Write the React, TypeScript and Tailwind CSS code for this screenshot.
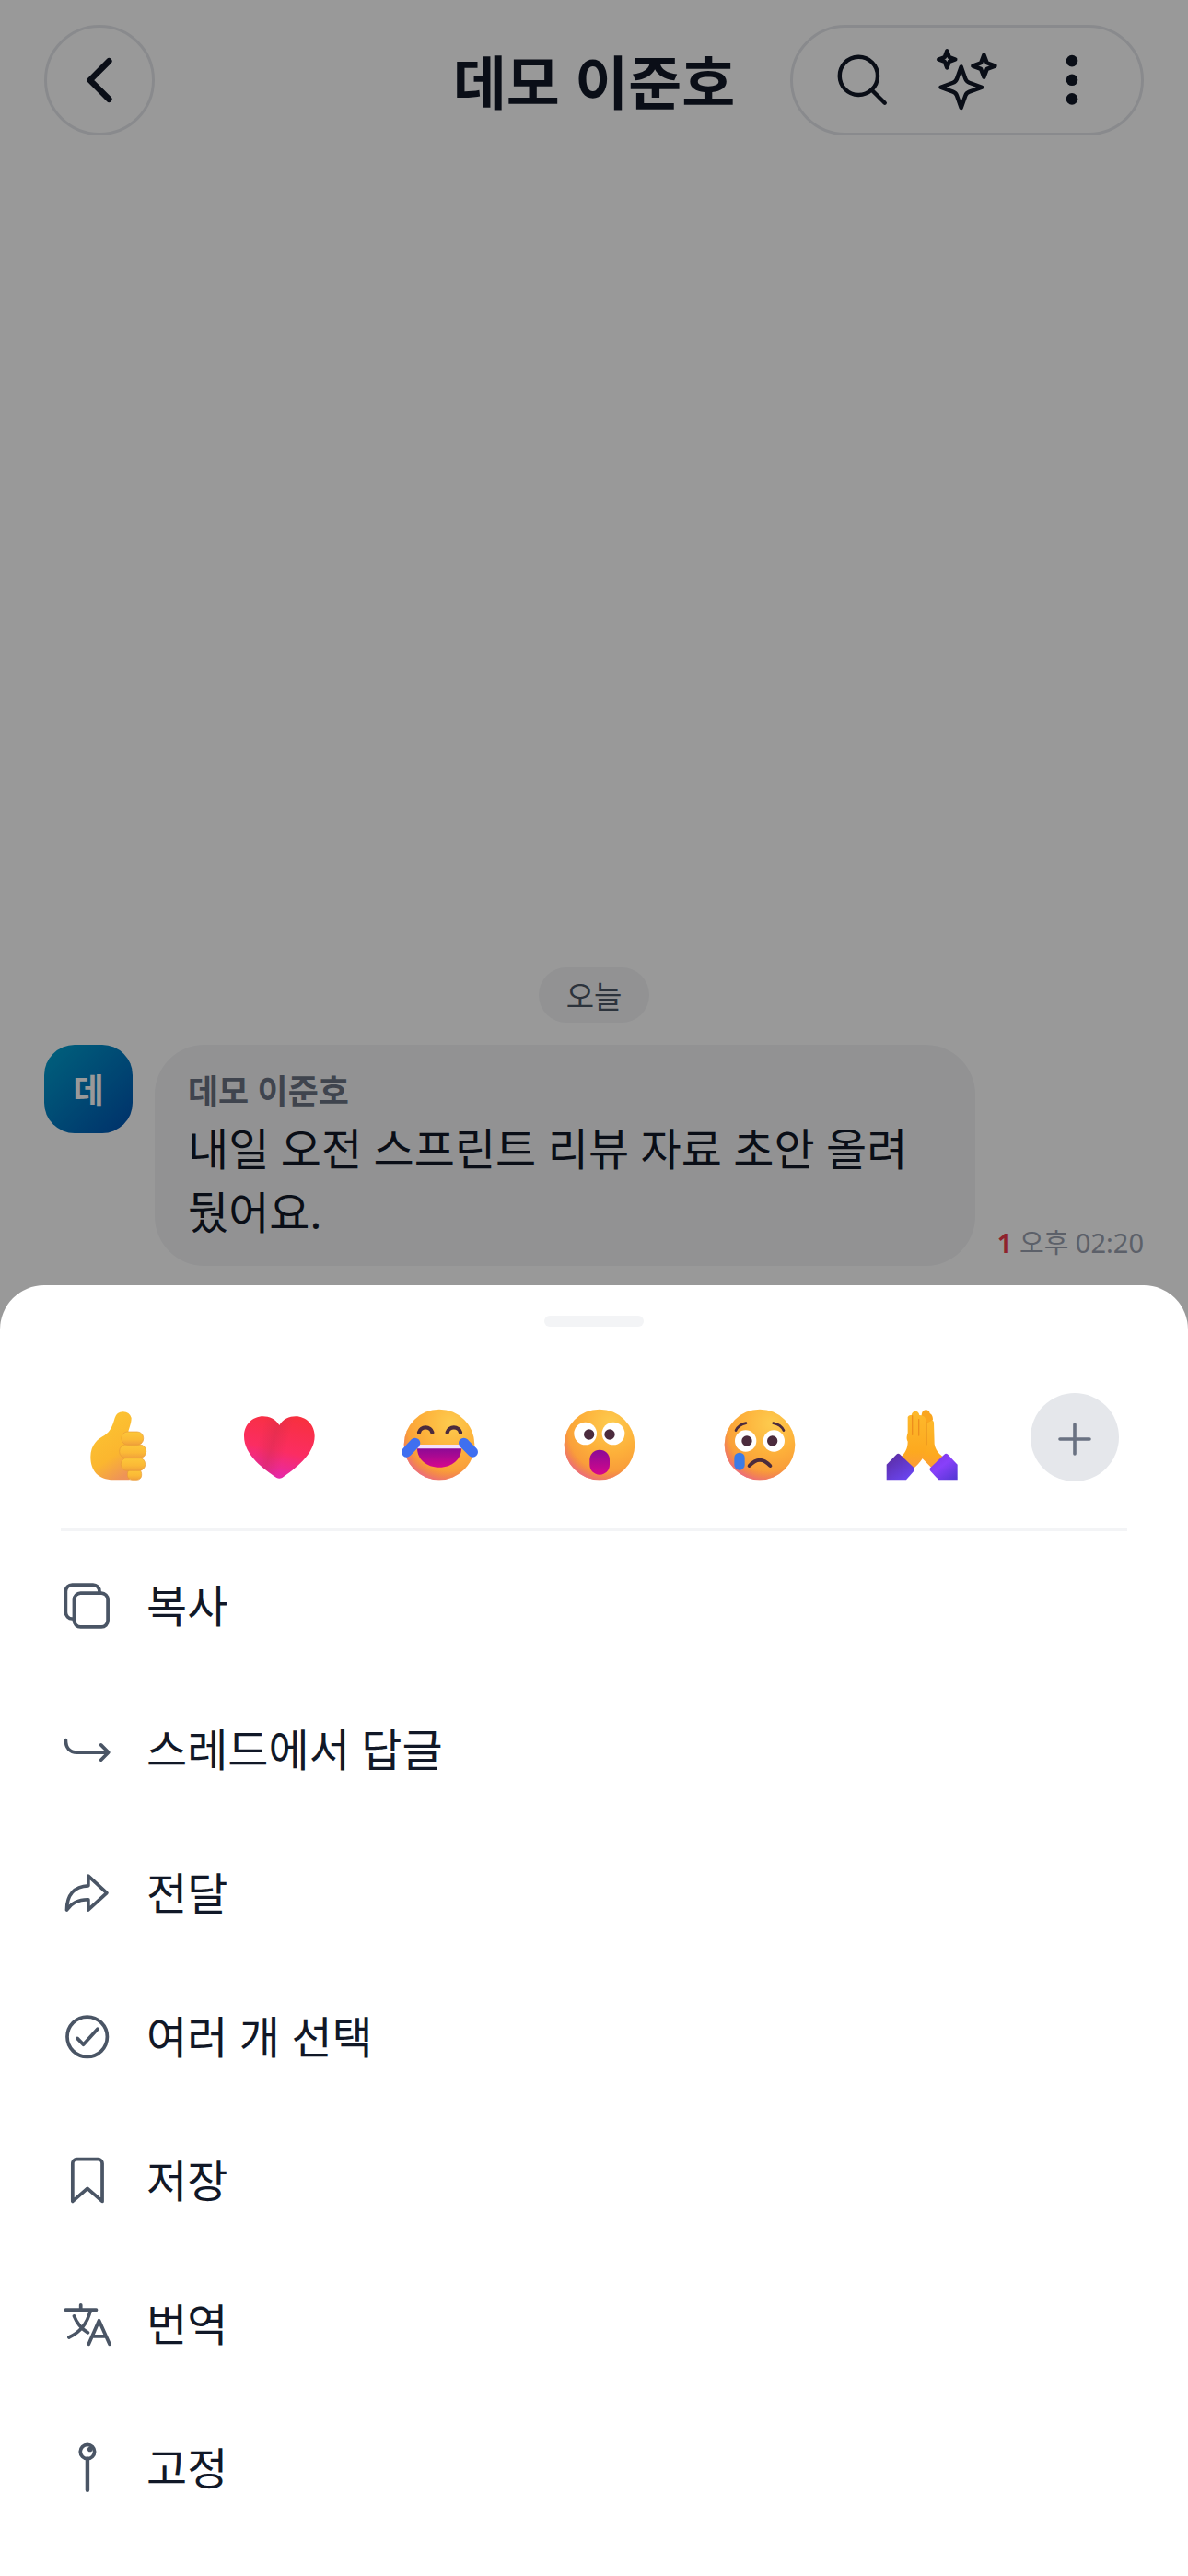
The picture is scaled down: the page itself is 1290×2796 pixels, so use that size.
import type { ReactNode } from 'react';

interface IconProps {
  children: ReactNode;
  className?: string;
  strokeWidth?: number;
}

const Icon: React.FC<IconProps> = ({ children, className = 'size-14', strokeWidth = 1.6 }) => (
  <svg
    viewBox="0 0 24 24"
    fill="none"
    stroke="currentColor"
    strokeWidth={strokeWidth}
    strokeLinecap="round"
    strokeLinejoin="round"
    className={`${className} shrink-0 overflow-visible`}
    aria-hidden="true"
  >
    {children}
  </svg>
);

const actions: { label: string; icon: ReactNode }[] = [
  {
    label: '복사',
    icon: (
      <>
        <rect x="6.2" y="6.1" width="15.7" height="15.7" rx="3" />
        <path d="M18 6V5.2a3 3 0 0 0-3-3H5.3a3 3 0 0 0-3 3V15a3 3 0 0 0 3 3h.9" />
      </>
    ),
  },
  {
    label: '스레드에서 답글',
    icon: <path d="M2.3 7.5c0 3.6 1.9 5.8 5.2 5.8H22M18.7 9.8l3.5 3.5-3.5 3.5" />,
  },
  {
    label: '전달',
    icon: <path d="M12.8 3.9l8.6 7.9-8.6 7.9v-4.8c-4.6-.1-7.6 1.3-10 4.8 0-6.9 3.5-11 10-11.2z" />,
  },
  {
    label: '여러 개 선택',
    icon: (
      <>
        <circle cx="12.3" cy="11.9" r="9.3" />
        <path d="M7.7 12.6l2.8 2.9 6.6-7.3" />
      </>
    ),
  },
  {
    label: '저장',
    icon: <path d="M5.5 21.6V4a2 2 0 0 1 2-2h9.8a2 2 0 0 1 2 2v17.6l-6.9-6z" />,
  },
  {
    label: '번역',
    icon: (
      <path d="M2.3 5.2h14.2M9.3 2.9v2.3M13.8 5.4C12.4 11.4 9 15.6 3.8 18M6.2 8.1c1.3 3.4 3.4 5.9 6.4 7.7M13 21.1l4.8-10.9 4.9 10.9M14.6 17.5h6.5" />
    ),
  },
  {
    label: '고정',
    icon: (
      <>
        <circle cx="12.4" cy="4.3" r="3.3" />
        <path d="M12.4 7.6v14.6" strokeWidth="1.9" />
        <circle cx="13.6" cy="3.2" r="1.2" fill="currentColor" stroke="none" />
      </>
    ),
  },
];

const Face: React.FC<{ children: ReactNode }> = ({ children }) => (
  <>
    <circle cx="132" cy="132" r="115" fill="url(#face)" />
    <circle cx="132" cy="132" r="115" fill="url(#faceShade)" />
    {children}
  </>
);

const heartPath =
  'M133 69c-13-21-33-29-53-29-35 0-62 28-62 64 0 64 67 108 106 136q9 5 18 0c39-28 106-75 106-136 0-36-28-64-62-64-21 0-40 8-53 29z';

const reactions: { label: string; art: ReactNode }[] = [
  {
    label: '좋아요',
    art: (
      <>
        <path
          d="M119 45a28 28 0 0 1 54 0c0 20-9 35-10 47l4 155h-52c-50 0-75-30-75-75 0-40 25-60 45-70 23-14 28-38 34-57z"
          fill="url(#thumb)"
        />
        <g fill="url(#finger)" stroke="#e89a35" strokeWidth="2">
          <rect x="160" y="212" width="46" height="35" rx="15" />
          <rect x="139" y="175" width="79" height="42" rx="20" />
          <rect x="134" y="132" width="87" height="44" rx="21" />
          <rect x="141" y="90" width="71" height="43" rx="20" />
        </g>
      </>
    ),
  },
  {
    label: '하트',
    art: (
      <>
        <path d={heartPath} fill="url(#heart)" />
        <path d={heartPath} fill="url(#heartFold)" />
      </>
    ),
  },
  {
    label: '웃겨요',
    art: (
      <Face>
        <path
          d="M66 92a22 20 0 0 1 43 0M158 92a22 20 0 0 1 43 0"
          fill="none"
          stroke="#4b2b3d"
          strokeWidth="13"
          strokeLinecap="round"
        />
        <path d="M60 143h144c0 36-30 63-72 63s-72-27-72-63z" fill="url(#mouth)" />
        <path d="M58 132h148l-2 13H60z" fill="#f3e0fb" />
        <path d="M26 156l27-29M212 127l29 29" stroke="#3f6ff0" strokeWidth="34" strokeLinecap="round" />
      </Face>
    ),
  },
  {
    label: '놀라워요',
    art: (
      <Face>
        <circle cx="86" cy="96" r="37" fill="#fff" />
        <circle cx="177" cy="96" r="37" fill="#fff" />
        <circle cx="98" cy="99" r="17" fill="#4b2b3d" />
        <circle cx="165" cy="99" r="17" fill="#4b2b3d" />
        <rect x="100" y="149" width="65" height="81" rx="32" fill="url(#mouth)" />
      </Face>
    ),
  },
  {
    label: '슬퍼요',
    art: (
      <Face>
        <path
          d="M54 86q10-20 33-24M176 62q25 5 34 24"
          fill="none"
          stroke="#4b2b3d"
          strokeWidth="8"
          strokeLinecap="round"
        />
        <circle cx="86" cy="120" r="35" fill="#fff" />
        <circle cx="178" cy="120" r="35" fill="#fff" />
        <circle cx="90" cy="120" r="17" fill="#4b2b3d" />
        <circle cx="173" cy="120" r="17" fill="#4b2b3d" />
        <path
          d="M98 201q34-38 68 0"
          fill="none"
          stroke="#4b2b3d"
          strokeWidth="12"
          strokeLinecap="round"
        />
        <rect x="49" y="158" width="34" height="57" rx="17" fill="#3d7be6" />
      </Face>
    ),
  },
  {
    label: '감사해요',
    art: (
      <>
        <path
          d="M153 60c0-12 24-12 24 0l2 70c4 24 18 34 32 46l-34 38c-18-16-30-30-44-44z"
          fill="url(#hands)"
        />
        <path d="M138 30c2-14 24-16 26 0 8 4 10 12 10 22l-20 10-20-10z" fill="#f9a51f" />
        <path
          d="M92 42c4-6 8-6 12-6 4-18 24-16 26 0 18 0 22 12 22 24v76c0 30-18 56-44 76l-38-40c12-12 22-26 22-50-6-10-2-20 0-28z"
          fill="url(#hands)"
        />
        <path d="M107 38v62M128 50v52" stroke="#ee8f1c" strokeWidth="4" strokeLinecap="round" fill="none" />
        <path d="M152 60v72" stroke="#d9791a" strokeWidth="4" strokeLinecap="round" />
        <path d="M23 247v-50l32-33q6-5 12 0l45 43q5 5 0 11l-25 29z" fill="url(#sleeveLeft)" />
        <path d="M254 247v-50l-31-33q-6-5-12 0l-45 43q-5 5 0 11l27 29z" fill="url(#sleeveRight)" />
      </>
    ),
  },
];

// Shared paint for the reaction drawings
const ReactionPaint: React.FC = () => (
  <svg width="0" height="0" className="absolute" aria-hidden="true">
    <defs>
      <radialGradient id="face" cx="0.66" cy="0.2" r="0.85">
        <stop offset="0" stopColor="#fdcb4e" />
        <stop offset="0.5" stopColor="#fdb03a" />
        <stop offset="1" stopColor="#f6903a" />
      </radialGradient>
      <radialGradient id="faceShade" cx="0.62" cy="0.32" r="0.74">
        <stop offset="0.75" stopColor="#ee6f5a" stopOpacity="0" />
        <stop offset="1" stopColor="#e8609a" stopOpacity="0.9" />
      </radialGradient>
      <linearGradient id="mouth" x1="0" y1="0" x2="0" y2="1">
        <stop offset="0" stopColor="#8a0a96" />
        <stop offset="1" stopColor="#d6078c" />
      </linearGradient>
      <linearGradient id="thumb" x1="0.3" y1="0" x2="0.7" y2="1">
        <stop offset="0" stopColor="#fcc532" />
        <stop offset="0.65" stopColor="#fbb62f" />
        <stop offset="1" stopColor="#ee9358" />
      </linearGradient>
      <linearGradient id="finger" x1="0" y1="0" x2="0" y2="1">
        <stop offset="0" stopColor="#fdc83a" />
        <stop offset="0.6" stopColor="#fbb936" />
        <stop offset="1" stopColor="#f0a03c" />
      </linearGradient>
      <linearGradient id="heart" x1="0.65" y1="0" x2="0.4" y2="1">
        <stop offset="0" stopColor="#f8303f" />
        <stop offset="0.55" stopColor="#fb2d62" />
        <stop offset="1" stopColor="#e428b0" />
      </linearGradient>
      <linearGradient id="heartFold" x1="0.3" y1="0" x2="0.7" y2="0.1">
        <stop offset="0" stopColor="#c92c4c" stopOpacity="0" />
        <stop offset="0.5" stopColor="#c92c4c" stopOpacity="0.35" />
        <stop offset="1" stopColor="#c92c4c" stopOpacity="0" />
      </linearGradient>
      <linearGradient id="hands" x1="0" y1="0" x2="0" y2="1">
        <stop offset="0" stopColor="#fdb92c" />
        <stop offset="0.7" stopColor="#fda91f" />
        <stop offset="1" stopColor="#fb9a3c" />
      </linearGradient>
      <linearGradient id="sleeveLeft" x1="0" y1="0" x2="0.7" y2="1">
        <stop offset="0" stopColor="#5a2a9c" />
        <stop offset="1" stopColor="#6a45f0" />
      </linearGradient>
      <linearGradient id="sleeveRight" x1="0" y1="0" x2="0.8" y2="1">
        <stop offset="0" stopColor="#7a35e0" />
        <stop offset="0.5" stopColor="#8840fa" />
        <stop offset="1" stopColor="#5a38d8" />
      </linearGradient>
    </defs>
  </svg>
);

const ChatHeader: React.FC = () => (
  <header className="grid grid-cols-[1fr_auto_1fr] items-center px-12 pt-[27px] text-[#111827]">
    <button
      type="button"
      aria-label="뒤로"
      className="flex size-[120px] items-center justify-center rounded-full border-[3px] border-gray-200"
    >
      <Icon className="size-[66px]" strokeWidth={2.4}>
        <path d="M15.75 19.5 8.25 12l7.5-7.5" />
      </Icon>
    </button>
    <h1 className="pt-1 text-[63px] leading-[90px] font-bold">데모 이준호</h1>
    <div className="flex h-[120px] items-center justify-self-end rounded-full border-[3px] border-gray-200 px-[18px]">
      <button type="button" aria-label="검색" className="flex w-[114px] justify-center">
        <Icon className="size-[66px]" strokeWidth={1.6}>
          <path d="m21 21-5.2-5.2m0 0A7.5 7.5 0 1 0 5.2 5.2a7.5 7.5 0 0 0 10.6 10.6Z" />
        </Icon>
      </button>
      <button type="button" aria-label="AI 요약" className="flex w-[114px] justify-center">
        <Icon className="size-[66px]">
          <path d="M9.7 6.7 11.4 11.5Q11.8 12.6 12.9 13L17.9 14.8 12.9 16.6Q11.8 17 11.4 18.1L9.7 22.9 8 18.1Q7.6 17 6.5 16.6L1.6 14.8 6.5 13Q7.6 12.6 8 11.5Z" />
          <path d="M4.1.5 5 2.9 7.4 3.8 5 4.7 4.1 7.1 3.2 4.7.8 3.8 3.2 2.9Z" />
          <path d="M18.7 2 19.9 5.2 23.1 6.4 19.9 7.6 18.7 10.8 17.5 7.6 14.3 6.4 17.5 5.2Z" />
        </Icon>
      </button>
      <button type="button" aria-label="더보기" className="flex w-[114px] justify-center">
        <Icon className="size-[66px]">
          <g fill="currentColor" stroke="none">
            <circle cx="12" cy="4.4" r="2.3" />
            <circle cx="12" cy="11.9" r="2.3" />
            <circle cx="12" cy="19.4" r="2.3" />
          </g>
        </Icon>
      </button>
    </div>
  </header>
);

const App: React.FC = () => {
  return (
    <div
      lang="ko"
      className="relative flex min-h-screen flex-col bg-white font-['Noto_Sans','Noto_Sans_CJK_KR',sans-serif]"
    >
      <ReactionPaint />
      <ChatHeader />

      <main className="flex flex-1 flex-col justify-end px-12 pb-[21px]">
        <p className="self-center rounded-full bg-gray-100 px-[30px] pt-1 text-[33px] leading-[56px] text-gray-600">
          오늘
        </p>
        <div className="mt-6 flex items-start gap-6">
          <div className="flex size-24 shrink-0 items-center justify-center rounded-[33px] bg-gradient-to-br from-[#00a3d0] to-[#0050b0] pt-1 text-[36px] font-bold text-white">
            데
          </div>
          <div className="min-w-0 max-w-[892px] rounded-[54px] bg-gray-100 px-9 py-6">
            <p className="text-[36px] leading-[54px] font-bold text-gray-500">데모 이준호</p>
            <p className="text-[48px] leading-[69px] text-[#111827]">내일 오전 스프린트 리뷰 자료 초안 올려뒀어요.</p>
          </div>
          <p className="self-end text-[29px] leading-[51px] whitespace-nowrap text-gray-400">
            <span className="font-bold text-[#ef3b4b]">1</span> 오후 02:20
          </p>
        </div>
      </main>

      <div className="absolute inset-0 bg-black/40" />

      <section
        role="dialog"
        aria-label="메시지 메뉴"
        className="relative rounded-t-[48px] bg-white px-[66px] pt-[33px] pb-[39px]"
      >
        <div className="mx-auto h-3 w-[108px] rounded-full bg-gray-100" />

        <div className="mt-[66px] flex items-center justify-between px-[9px] pb-[45px]">
          {reactions.map((reaction) => (
            <button
              key={reaction.label}
              type="button"
              aria-label={reaction.label}
              className="flex size-[108px] items-center justify-center pt-4"
            >
              <svg viewBox="0 0 264 264" className="size-[88px]" aria-hidden="true">
                {reaction.art}
              </svg>
            </button>
          ))}
          <button
            type="button"
            aria-label="이모지 추가"
            className="flex size-24 items-center justify-center rounded-full bg-gray-200 text-gray-500"
          >
            <Icon className="size-12" strokeWidth={1.8}>
              <path d="M12 5v16M4 13h16" />
            </Icon>
          </button>
        </div>

        <hr className="border-t-[3px] border-gray-100" />

        <ul className="pt-[3px]">
          {actions.map((action) => (
            <li key={action.label}>
              <button
                type="button"
                className="flex h-[156px] w-full items-center gap-[37px] text-left text-[48px] leading-[72px] text-[#111827]"
              >
                <span className="text-gray-600">
                  <Icon>{action.icon}</Icon>
                </span>
                {action.label}
              </button>
            </li>
          ))}
        </ul>
      </section>
    </div>
  );
};

export default App;
